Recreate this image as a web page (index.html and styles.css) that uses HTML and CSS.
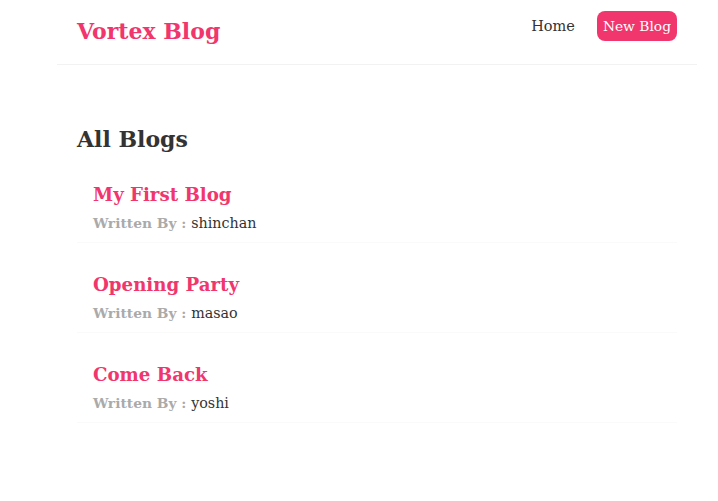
FILE: index.html
```html
<!DOCTYPE html>
<html lang="en">
<head>
<meta charset="utf-8">
<title>Vortex Blog</title>
<link rel="stylesheet" href="styles.css">
</head>
<body>
<div class="app">
  <nav class="navbar">
    <h1 class="brand">Vortex Blog</h1>
    <div class="links">
      <a class="link" href="#">Home</a>
      <a class="link link-new" href="#">New Blog</a>
    </div>
  </nav>
  <main class="content">
    <h2 class="page-title">All Blogs</h2>
    <div class="blog-preview">
      <h2 class="blog-title">My First Blog</h2>
      <p class="blog-author"><span class="label">Written By : </span>shinchan</p>
    </div>
    <div class="blog-preview">
      <h2 class="blog-title">Opening Party</h2>
      <p class="blog-author"><span class="label">Written By : </span>masao</p>
    </div>
    <div class="blog-preview">
      <h2 class="blog-title">Come Back</h2>
      <p class="blog-author"><span class="label">Written By : </span>yoshi</p>
    </div>
  </main>
</div>
</body>
</html>
```
FILE: styles.css
```css
* {
  margin: 0;
  box-sizing: content-box;
}
body {
  margin: 0;
  background: #fff;
  font-family: "DejaVu Serif", "Liberation Serif", serif;
  color: #333;
}
.app {
  padding-left: 57px;
}
.navbar {
  width: 600px;
  height: 53px;
  padding: 11px 20px 0;
  display: flex;
  align-items: flex-start;
  border-bottom: 1px solid #f2f2f2;
}
.brand {
  font-size: 22px;
  line-height: 24px;
  margin-top: 8px;
  color: #f1356d;
  font-weight: bold;
}
.links {
  margin-left: auto;
  display: flex;
  align-items: center;
}
.link {
  margin-left: 16px;
  padding: 6px;
  font-size: 14.5px;
  line-height: 18px;
  color: #333;
  text-decoration: none;
}
.link-new {
  font-size: 13.8px;
  color: #fff;
  background: #f1356d;
  border-radius: 8px;
}
.content {
  width: 600px;
  margin: 40px 0;
  padding: 20px;
}
.page-title {
  font-size: 22px;
  line-height: 28px;
  font-weight: bold;
  color: #333;
}
.blog-preview {
  padding: 10px 16px;
  margin: 20px 0;
  border-bottom: 1px solid #fafafa;
}
.blog-title {
  font-size: 18.2px;
  line-height: 23px;
  margin-bottom: 8px;
  color: #f1356d;
  font-weight: bold;
}
.blog-author {
  font-size: 14.3px;
  line-height: 18px;
  color: #333;
}
.label {
  font-size: 13.8px;
  color: #aaa;
  font-weight: bold;
}
```
